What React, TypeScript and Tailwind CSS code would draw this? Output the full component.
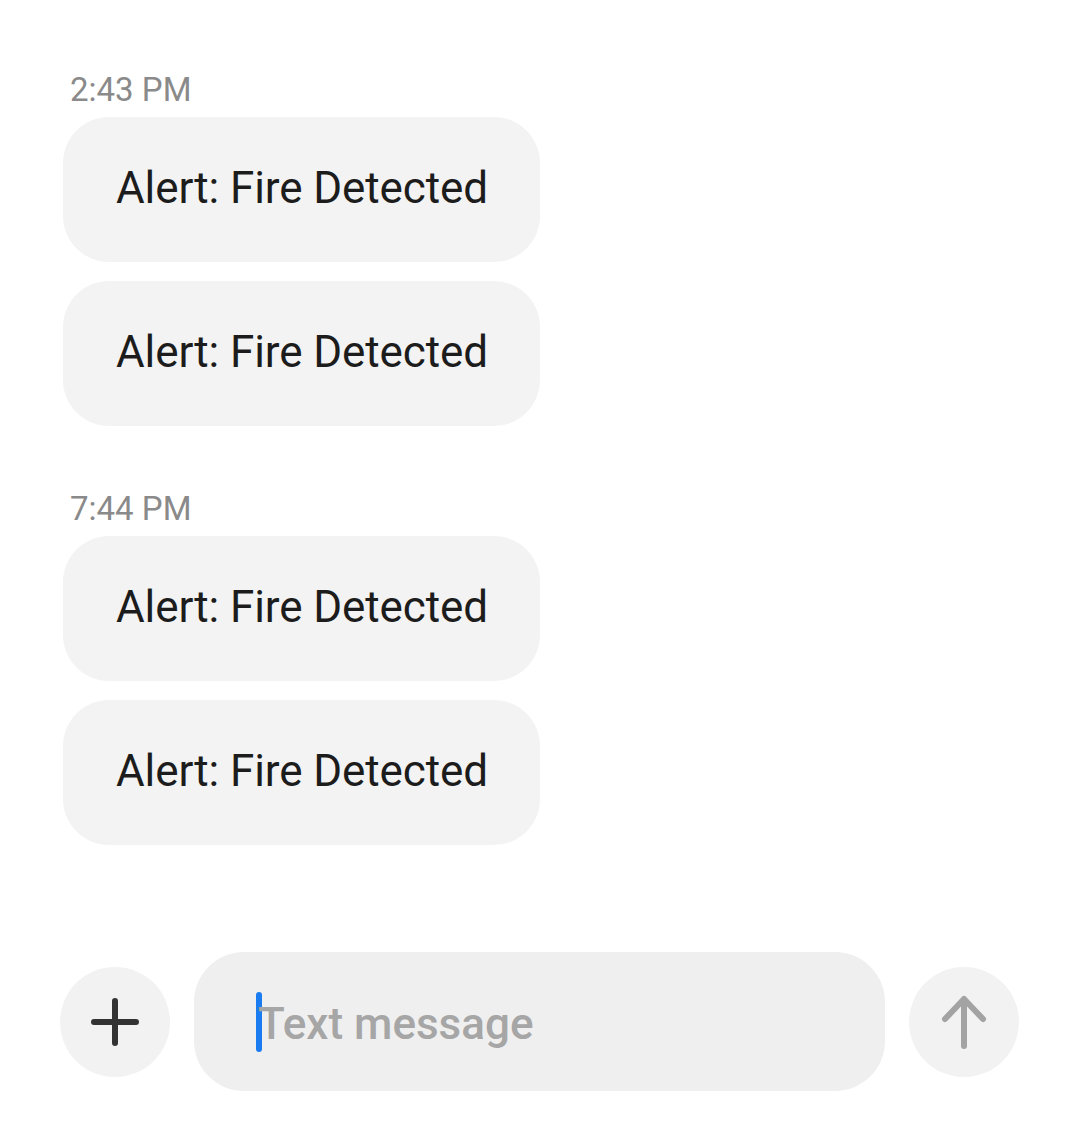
import React from 'react'

const Bubble: React.FC<{ text: string }> = ({ text }) => (
    <div className="flex items-center w-[477px] h-[145px] rounded-[46px] bg-[#f3f3f3] pl-[53px]">
        <span className="text-[44px] text-[#1c1c1c] leading-none tracking-[-0.1px] -mt-[3px]">{text}</span>
    </div>
)

const Stamp: React.FC<{ time: string }> = ({ time }) => (
    <div className="h-[40px] pl-[7px] text-[33px] leading-[40px] text-[#8a8a8a]">{time}</div>
)

export default function App() {
    return (
        <div className="w-[1080px] h-[1132px] bg-white flex flex-col" style={{ fontFamily: 'Roboto, "Noto Sans", sans-serif' }}>
            <div className="flex flex-col pl-[63px] pt-[70px]">
                <Stamp time="2:43 PM" />
                <div className="flex flex-col gap-[19px] mt-[7px]">
                    <Bubble text="Alert: Fire Detected" />
                    <Bubble text="Alert: Fire Detected" />
                </div>
                <div className="mt-[63px]">
                    <Stamp time="7:44 PM" />
                </div>
                <div className="flex flex-col gap-[19px] mt-[7px]">
                    <Bubble text="Alert: Fire Detected" />
                    <Bubble text="Alert: Fire Detected" />
                </div>
            </div>
            <div className="flex items-center mt-[107px] pl-[60px]">
                <button className="flex items-center justify-center w-[110px] h-[110px] rounded-full bg-[#f2f2f2]">
                    <svg width="48" height="48" viewBox="0 0 48 48" fill="none" stroke="#333" strokeWidth="6" strokeLinecap="round">
                        <path d="M24 3v42M3 24h42" />
                    </svg>
                </button>
                <div className="flex items-center ml-[24px] w-[691px] h-[139px] rounded-[50px] bg-[#efefef] pl-[62px]">
                    <span className="w-[6px] h-[60px] rounded-full bg-[#1a7cf0]"></span>
                    <span className="text-[44px] font-medium text-[#a6a6a6] -ml-[4px] mt-[4px] leading-none">Text message</span>
                </div>
                <button className="flex items-center justify-center ml-[24px] w-[110px] h-[110px] rounded-full bg-[#f2f2f2]">
                    <svg width="46" height="54" viewBox="0 0 46 54" fill="none" stroke="#a3a3a3" strokeWidth="6" strokeLinecap="round" strokeLinejoin="round">
                        <path d="M23 51V4M4 24L23 4l19 20" />
                    </svg>
                </button>
            </div>
        </div>
    )
}
